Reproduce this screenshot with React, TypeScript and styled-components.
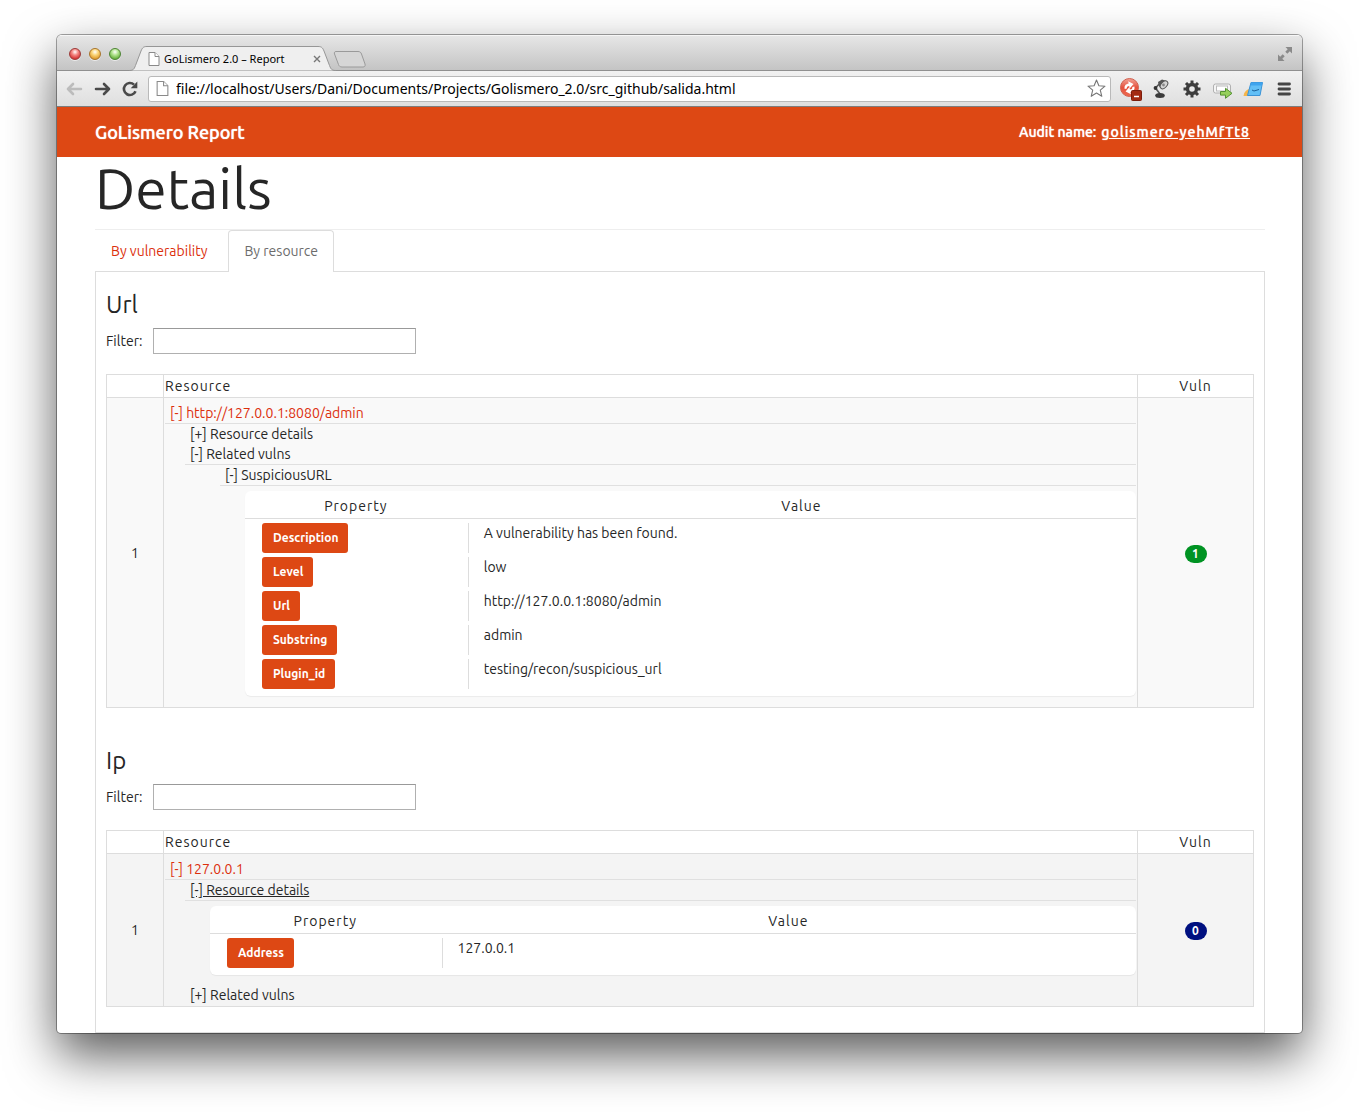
import React from 'react';
import styled, { createGlobalStyle } from 'styled-components';

const ORANGE = '#dd4814';
const LINK = '#dc2f0d';
const INK = '#262626';
const LINE = '#dddddd';
const UI_FONT = 'Ubuntu, "Open Sans", "Noto Sans", sans-serif';
const CHROME_FONT = '"Lucida Grande", "Noto Sans", "Open Sans", sans-serif';

const GlobalStyle = createGlobalStyle`
  *, *::before, *::after { box-sizing: border-box; }
  body {
    margin: 0;
    background: #fff;
    color: ${INK};
    font: 14px/20px ${UI_FONT};
  }
  button, input { font: inherit; color: inherit; }
  button { padding: 0; border: 0; background: none; cursor: pointer; }
  svg { display: block; }
`;

const Desktop = styled.div`
  padding: 35px 57px 79px;
`;

const BrowserWindow = styled.div`
  overflow: hidden;
  border-radius: 5px 5px 4px 4px;
  background: #fff;
  box-shadow: 0 0 0 1px rgba(0, 0, 0, 0.35), 0 22px 50px rgba(0, 0, 0, 0.65);
`;

/* ---------- browser frame ---------- */

const TitleBar = styled.div`
  display: flex;
  align-items: flex-end;
  height: 36px;
  padding: 0 9px 0 12px;
  border-top: 1px solid #f6f6f6;
  background: linear-gradient(#e6e6e6, #c3c3c3);
  box-shadow: inset 0 -1px #909090;
  font-family: ${CHROME_FONT};
`;

const Lights = styled.div`
  display: flex;
  gap: 8px;
  align-self: center;
  margin-right: 8px;
`;

const Light = styled.button<{ $rim: string; $dark: string; $light: string }>`
  width: 12px;
  height: 12px;
  border: 1px solid ${(p) => p.$rim};
  border-radius: 50%;
  background: radial-gradient(circle at 50% 30%, #fff 0, ${(p) => p.$light} 35%, ${(p) => p.$dark} 75%);
  box-shadow: 0 1px rgba(255, 255, 255, 0.6);
`;

const Tab = styled.div`
  display: grid;
  width: 207px;
  height: 25px;
`;

const TabShape = styled.svg`
  grid-area: 1 / 1;
`;

const TabContent = styled.div`
  grid-area: 1 / 1;
  z-index: 1;
  display: flex;
  align-items: center;
  gap: 4px;
  padding: 0 15px 0 19px;
  color: #000;
  font-size: 11px;
`;

const TabTitle = styled.span`
  flex: 1;
  white-space: nowrap;
`;

const NewTab = styled.button`
  align-self: flex-end;
  margin: 0 auto 3px -3px;
`;

const FullScreen = styled.button`
  align-self: center;
`;

const Toolbar = styled.div`
  display: flex;
  align-items: center;
  height: 36px;
  padding: 0 5px 0 8px;
  border-bottom: 1px solid #7d7d7d;
  background: linear-gradient(#f1f1f1, #dfdfdf);
  font-family: ${CHROME_FONT};
`;

const NavButtons = styled.div`
  display: flex;
  gap: 10px;
  margin-right: 9px;
`;

const AddressBar = styled.div`
  display: flex;
  flex: 1;
  align-items: center;
  height: 26px;
  gap: 7px;
  padding: 0 4px 0 7px;
  border: 1px solid #b9b9b9;
  border-radius: 3px;
  background: #fff;
`;

const AddressInput = styled.input`
  flex: 1;
  min-width: 0;
  padding: 0;
  border: 0;
  outline: 0;
  color: #000;
  font-size: 14px;
`;

const Extensions = styled.div`
  display: flex;
  align-items: center;
  gap: 7px;
  margin-left: 7px;
`;

/* ---------- report page ---------- */

const NavBar = styled.header`
  display: flex;
  align-items: center;
  justify-content: space-between;
  height: 50px;
  padding: 0 52px 0 38px;
  background: ${ORANGE};
  color: #fff;
  font-weight: 500;
  text-shadow: 0 0 1px #fff;
`;

const Brand = styled.span`
  font-size: 18px;
`;

const Audit = styled.span`
  display: flex;
  gap: 5px;
`;

const AuditLink = styled.a`
  color: #fff;
  letter-spacing: 1px;
`;

const Page = styled.main`
  padding: 0 37px 0 38px;
`;

const PageTitle = styled.h1`
  height: 73px;
  margin: 0;
  border-bottom: 1px solid #eeeeee;
  font-size: 57px;
  font-weight: 400;
  line-height: 62px;
`;

const Tabs = styled.div`
  display: flex;
  gap: 5px;
  margin-bottom: -1px;
`;

const PageTab = styled.button<{ $active?: boolean }>`
  height: 42px;
  padding: 0 15px 1px;
  border: 1px solid ${(p) => (p.$active ? LINE : 'transparent')};
  border-bottom: 0;
  border-radius: 4px 4px 0 0;
  background: ${(p) => (p.$active ? '#fff' : 'transparent')};
  color: ${(p) => (p.$active ? '#6c6c6c' : LINK)};
`;

const Panel = styled.div`
  padding: 10px 10px 25px;
  border: 1px solid ${LINE};
`;

const Group = styled.section`
  & + & { margin-top: 30px; }
`;

const GroupTitle = styled.h2`
  margin: 0;
  font-size: 24px;
  font-weight: 400;
  line-height: 46px;
`;

const FilterRow = styled.label`
  display: flex;
  align-items: center;
  gap: 11px;
  margin-bottom: 20px;
`;

const FilterInput = styled.input`
  width: 263px;
  height: 26px;
  padding: 0 4px;
  border: 1px solid #b0b0b0;
  border-top-color: #999;
  background: #fff;
`;

const ResourceTable = styled.table`
  width: 100%;
  table-layout: fixed;
  border-collapse: collapse;
`;

const Head = styled.th<{ $left?: boolean; $width?: string }>`
  width: ${(p) => p.$width || 'auto'};
  height: 23px;
  padding: 0 1px;
  border: 1px solid ${LINE};
  font-weight: 400;
  letter-spacing: 1px;
  text-align: ${(p) => (p.$left ? 'left' : 'center')};
`;

const Cell = styled.td<{ $tint: string; $center?: boolean }>`
  padding: 0 1px;
  border: 1px solid ${LINE};
  background: ${(p) => p.$tint};
  text-align: ${(p) => (p.$center ? 'center' : 'left')};
`;

const Badge = styled.span<{ $color: string }>`
  display: inline-block;
  width: 22px;
  border-radius: 9px;
  background: ${(p) => p.$color};
  color: #fff;
  font-size: 12px;
  font-weight: 700;
  line-height: 18px;
`;

const Tree = styled.div`
  padding: 5px 0 1px;
`;

const Branch = styled.div<{ $indent: number }>`
  margin-left: ${(p) => p.$indent}px;
`;

const Node = styled.button<{ $open?: boolean; $root?: boolean; $underlined?: boolean }>`
  display: block;
  width: 100%;
  height: ${(p) => (p.$open ? 21 : 20)}px;
  padding: 0 5px;
  border-bottom: ${(p) => (p.$open ? '1px solid #e0e0e0' : '0')};
  color: ${(p) => (p.$root ? LINK : INK)};
  text-align: left;
  text-decoration: ${(p) => (p.$underlined ? 'underline' : 'none')};
`;

const PropertyBox = styled.div`
  margin: 5px 0 10px 25px;
  padding-bottom: 7px;
  border-radius: 6px;
  background: #fff;
  box-shadow: 0 1px 1px rgba(0, 0, 0, 0.06);
`;

const PropertyTable = styled.table`
  width: 100%;
  table-layout: fixed;
  border-collapse: separate;
  border-spacing: 0;
`;

const PropertyHead = styled.th<{ $width?: string }>`
  width: ${(p) => p.$width || 'auto'};
  height: 28px;
  padding: 3px 1px 0 0;
  border-bottom: 1px solid ${LINE};
  font-weight: 400;
  letter-spacing: 1px;
  text-align: center;
`;

const PropertyCell = styled.td`
  padding: 4px 0 0;
`;

const LabelSlot = styled.div`
  height: 30px;
  padding-left: 17px;
`;

const Label = styled.span`
  display: inline-block;
  padding: 0 10px 0 11px;
  border-radius: 3px;
  background: ${ORANGE};
  color: #fff;
  font-size: 12px;
  font-weight: 700;
  line-height: 30px;
`;

const ValueSlot = styled.div`
  height: 30px;
  padding-left: 15px;
  border-left: 1px solid ${LINE};
`;

/* ---------- drawings ---------- */

const FileIcon = ({ size = 14 }: { size?: number }) => (
  <svg width={size - 2} height={size} viewBox="0 0 12 14" fill="#fff" stroke="#8a8a8a">
    <path d="M1 .5h6l4 4v9H1z" />
    <path d="M7 .5v4h4" />
  </svg>
);

const Arrow = ({ color, back }: { color: string; back?: boolean }) => (
  <svg width="18" height="18" viewBox="0 0 18 18" fill="none" stroke={color} strokeWidth="2.6" strokeLinejoin="round" strokeLinecap="round">
    <path d={back ? 'M16 9H3M8 4 3 9l5 5' : 'M3 9h13M11 4l5 5-5 5'} />
  </svg>
);

const ReloadIcon = () => (
  <svg width="18" height="18" viewBox="0 0 18 18">
    <path d="M14.5 11.2A6 6 0 1 1 13 4.6" fill="none" stroke="#4a4a4a" strokeWidth="2.6" />
    <path d="M16.3 1.6v6.6H9.7z" fill="#4a4a4a" />
  </svg>
);

const StarIcon = () => (
  <svg width="19" height="19" viewBox="0 0 19 19" fill="#fff" stroke="#777" strokeWidth="1.1" strokeLinejoin="round">
    <path d="m9.5 1 2.4 5.8 6.1.4-4.7 4 1.5 6.1-5.3-3.3-5.3 3.3 1.5-6.1-4.7-4 6.1-.4z" />
  </svg>
);

const SyncIcon = () => (
  <svg width="24" height="26" viewBox="0 0 24 26">
    <defs>
      <linearGradient id="ball" x1="0" y1="0" x2="0" y2="1">
        <stop offset="0" stopColor="#f2a396" />
        <stop offset=".5" stopColor="#e5533f" />
        <stop offset="1" stopColor="#ee6a50" />
      </linearGradient>
    </defs>
    <circle cx="11.5" cy="11.5" r="9" fill="url(#ball)" stroke="#d2604f" />
    <g transform="rotate(-12 11.5 11.5)">
      <path d="M6.5 12c0-3.400 2-4.500 5-4.500V5l4.700 3.800-4.700 3.600v-2.500c-2-.1-2.800.6-2.800 2.100z" fill="#fff" />
      <path d="M16.500 11.500c0 3.400-2 4.500-5 4.500v2.300L6.800 14.700l4.700-3.700v2.600c2 .1 2.800-.6 2.800-2.100z" fill="#fff" />
    </g>
    <rect x="13.5" y="14.5" width="10" height="10" rx="1" fill="#a32a12" stroke="#7c1d0b" />
    <path d="M16 20.5h5" stroke="#fff" strokeWidth="1.4" />
  </svg>
);

const LampIcon = () => (
  <svg width="24" height="22" viewBox="0 0 24 22">
    <path d="m12 4-5.500 6L11 16" fill="none" stroke="#555" strokeWidth="1.6" />
    <circle cx="6.5" cy="10" r="1.9" fill="#333" />
    <path d="m9 4 4-2.500 4.500 1.500-6 7.500-1.500-2.500z" fill="#555" />
    <ellipse cx="15" cy="6.8" rx="4.6" ry="2.9" transform="rotate(-48 15 6.8)" fill="#d4d4d4" stroke="#555" />
    <circle cx="14.5" cy="7" r="1.4" fill="#888" />
    <ellipse cx="11" cy="17.5" rx="4.8" ry="2.5" fill="#3a3a3a" />
  </svg>
);

const GearIcon = () => (
  <svg width="24" height="22" viewBox="0 0 24 22">
    <circle cx="12" cy="11" r="4.5" fill="none" stroke="#3c3c3c" strokeWidth="3.4" />
    <g stroke="#3c3c3c" strokeWidth="3">
      <path d="M12 2.500v3M12 16.500v3M3.500 11h3M17.500 11h3M6 5l2.100 2.100M15.900 14.900 18 17M18 5l-2.100 2.100M8.100 14.900 6 17" />
    </g>
  </svg>
);

const SendIcon = () => (
  <svg width="24" height="22" viewBox="0 0 24 22">
    <rect x="2.5" y="6" width="17" height="9" rx="2" fill="#f4f4f4" stroke="#b0b0b0" />
    <rect x="5.5" y="8" width="11" height="5" fill="#fff" stroke="#bbb" />
    <path d="M9.500 13.500h5v-3.200l6.500 5-6.500 5v-3.200h-5z" fill="#96cf5c" stroke="#549132" />
  </svg>
);

const NoteIcon = () => (
  <svg width="24" height="22" viewBox="0 0 24 22">
    <path d="M1.500 18c.5-4 2.500-6 5.500-7v7z" fill="#f6b54b" />
    <path d="M9 4.500h11.500L18 17.500H5.500z" fill="#62bff6" stroke="#3b93d6" />
    <path d="M9.200 4.500H20.500L19.900 7.500H8.400z" fill="#3ea4ee" />
    <path d="m10 12 2 1 5-1.500" fill="none" stroke="#1a5f97" />
  </svg>
);

const MenuIcon = () => (
  <svg width="24" height="22" viewBox="0 0 24 22" stroke="#444" strokeWidth="2.8" strokeLinecap="round">
    <path d="M6 6h10.500M6 11h10.500M6 16h10.500" />
  </svg>
);

const ExpandIcon = () => (
  <svg width="16" height="16" viewBox="0 0 16 16" fill="#8a8a8a">
    <path d="M8.500 1H15v6.500l-2.200-2.200-2.500 2.400-2-2 2.400-2.500zM7.500 15H1V8.500l2.200 2.200 2.500-2.400 2 2-2.400 2.500z" />
  </svg>
);

/* ---------- data and page parts ---------- */

type Property = [name: string, value: string];

const vulnerability: Property[] = [
  ['Description', 'A vulnerability has been found.'],
  ['Level', 'low'],
  ['Url', 'http://127.0.0.1:8080/admin'],
  ['Substring', 'admin'],
  ['Plugin_id', 'testing/recon/suspicious_url'],
];

const address: Property[] = [['Address', '127.0.0.1']];

const Properties = ({ rows }: { rows: Property[] }) => (
  <PropertyBox>
    <PropertyTable>
      <thead>
        <tr>
          <PropertyHead $width="25%">Property</PropertyHead>
          <PropertyHead>Value</PropertyHead>
        </tr>
      </thead>
      <tbody>
        {rows.map(([name, value]) => (
          <tr key={name}>
            <PropertyCell><LabelSlot><Label>{name}</Label></LabelSlot></PropertyCell>
            <PropertyCell><ValueSlot>{value}</ValueSlot></PropertyCell>
          </tr>
        ))}
      </tbody>
    </PropertyTable>
  </PropertyBox>
);

interface ResourceGroupProps {
  title: string;
  tint: string;
  count: number;
  badge: string;
  children: React.ReactNode;
}

const ResourceGroup = ({ title, tint, count, badge, children }: ResourceGroupProps) => (
  <Group>
    <GroupTitle>{title}</GroupTitle>
    <FilterRow>
      Filter:
      <FilterInput type="text" />
    </FilterRow>
    <ResourceTable>
      <thead>
        <tr>
          <Head $width="57px" />
          <Head $left>Resource</Head>
          <Head $width="116px">Vuln</Head>
        </tr>
      </thead>
      <tbody>
        <tr>
          <Cell $tint={tint} $center>1</Cell>
          <Cell $tint={tint}><Tree>{children}</Tree></Cell>
          <Cell $tint={tint} $center><Badge $color={badge}>{count}</Badge></Cell>
        </tr>
      </tbody>
    </ResourceTable>
  </Group>
);

export default function App() {
  return (
    <Desktop>
      <GlobalStyle />
      <BrowserWindow>
        <TitleBar>
          <Lights>
            <Light aria-label="Close" $rim="#9c3a38" $dark="#d8383a" $light="#f58a86" />
            <Light aria-label="Minimize" $rim="#a8742a" $dark="#e2a032" $light="#fbd77c" />
            <Light aria-label="Zoom" $rim="#4d8434" $dark="#6cb544" $light="#b5e593" />
          </Lights>
          <Tab>
            <TabShape width="207" height="25" viewBox="0 0 207 25">
              <path d="M0 24.500c4 0 5-1 6.500-5L12 5C13.500 1.500 14.500.5 18 .5h171c3.500 0 4.500 1 6 4.500l5.500 14.500c1.500 4 2.500 5 6.500 5z" fill="#efefef" />
              <path d="M0 24.500c4 0 5-1 6.500-5L12 5C13.500 1.500 14.500.5 18 .5h171c3.500 0 4.500 1 6 4.500l5.500 14.500c1.500 4 2.500 5 6.500 5" fill="none" stroke="#969696" />
            </TabShape>
            <TabContent>
              <FileIcon />
              <TabTitle>GoLismero 2.0 – Report</TabTitle>
              <svg width="8" height="8" viewBox="0 0 8 8" stroke="#777" strokeWidth="1.4">
                <path d="m1 1 6 6M7 1 1 7" />
              </svg>
            </TabContent>
          </Tab>
          <NewTab aria-label="New tab">
            <svg width="33" height="17" viewBox="0 0 33 17">
              <path d="M3 .5h22c2 0 3 1 3.500 2.500l3.500 10c.5 2-.2 3-2 3H9c-2 0-3-1-3.500-2.500L1.500 3C1 1.500 1.500.5 3 .5z" fill="#d6d6d6" stroke="#9a9a9a" />
            </svg>
          </NewTab>
          <FullScreen aria-label="Full screen"><ExpandIcon /></FullScreen>
        </TitleBar>
        <Toolbar>
          <NavButtons>
            <button aria-label="Back"><Arrow back color="#bcbcbc" /></button>
            <button aria-label="Forward"><Arrow color="#4a4a4a" /></button>
            <button aria-label="Reload"><ReloadIcon /></button>
          </NavButtons>
          <AddressBar>
            <FileIcon size={15} />
            <AddressInput
              aria-label="Address"
              defaultValue="file://localhost/Users/Dani/Documents/Projects/Golismero_2.0/src_github/salida.html"
            />
            <button aria-label="Bookmark"><StarIcon /></button>
          </AddressBar>
          <Extensions>
            <button aria-label="Sync"><SyncIcon /></button>
            <button aria-label="Lamp"><LampIcon /></button>
            <button aria-label="Settings"><GearIcon /></button>
            <button aria-label="Send"><SendIcon /></button>
            <button aria-label="Notes"><NoteIcon /></button>
            <button aria-label="Menu"><MenuIcon /></button>
          </Extensions>
        </Toolbar>

        <NavBar>
          <Brand>GoLismero Report</Brand>
          <Audit>
            Audit name: <AuditLink href="#audit">golismero-yehMfTt8</AuditLink>
          </Audit>
        </NavBar>

        <Page>
          <PageTitle>Details</PageTitle>
          <Tabs role="tablist">
            <PageTab role="tab" aria-selected={false}>By vulnerability</PageTab>
            <PageTab role="tab" aria-selected $active>By resource</PageTab>
          </Tabs>
          <Panel role="tabpanel">
            <ResourceGroup title="Url" tint="#f9f9f9" count={1} badge="#009323">
              <Node $root $open>[-] http://127.0.0.1:8080/admin</Node>
              <Branch $indent={20}>
                <Node>[+] Resource details</Node>
                <Node $open>[-] Related vulns</Node>
                <Branch $indent={35}>
                  <Node $open>[-] SuspiciousURL</Node>
                  <Properties rows={vulnerability} />
                </Branch>
              </Branch>
            </ResourceGroup>
            <ResourceGroup title="Ip" tint="#f4f4f4" count={0} badge="#001080">
              <Node $root $open>[-] 127.0.0.1</Node>
              <Branch $indent={20}>
                <Node $open $underlined>[-] Resource details</Node>
                <Properties rows={address} />
                <Node>[+] Related vulns</Node>
              </Branch>
            </ResourceGroup>
          </Panel>
        </Page>
      </BrowserWindow>
    </Desktop>
  );
}
